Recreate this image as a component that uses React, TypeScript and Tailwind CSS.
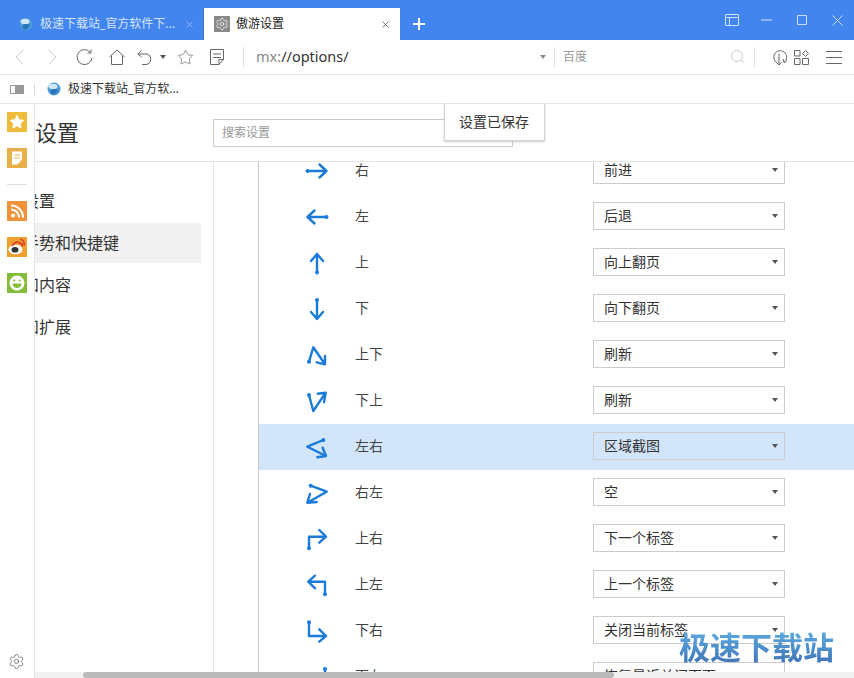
import { Settings, Star, X } from "lucide-react";
import type { ReactNode } from "react";

const FONT = "font-['Noto_Sans','Noto_Sans_CJK_SC',sans-serif]";

// gesture arrows, traced in a 24x24 box around the row's icon centre
const gestures: { label: string; action: string; dot: [number, number]; d: string; active?: boolean }[] = [
  { label: "右", action: "前进", dot: [2.5, 12], d: "M2.5 12H21.5M14.500 5.500L21.500 12L14.500 18.500" },
  { label: "左", action: "后退", dot: [21.5, 12], d: "M21.5 12H2.5M9.500 5.500L2.500 12L9.500 18.500" },
  { label: "上", action: "向上翻页", dot: [12, 21.5], d: "M12 21.5V3M6 10L12 3L18 10" },
  { label: "下", action: "向下翻页", dot: [12, 3], d: "M12 3V22M6 15L12 22L18 15" },
  { label: "上下", action: "刷新", dot: [4, 18.7], d: "M4 18.7L8.3 4.3L20 21.3M11.7 19.3L20 21.3L20 13" },
  { label: "下上", action: "刷新", dot: [4, 6], d: "M4 6L8.3 22L20.7 3.7M12.7 4.7L20.7 3.7L19 13.3" },
  { label: "左右", action: "区域截图", dot: [18.3, 5], d: "M18.3 5L2.3 11.7L21 21M12.3 22.3L21 21L17.7 12.7", active: true },
  { label: "右左", action: "空", dot: [5.7, 4.7], d: "M5.7 4.7L21.7 10.7L2.3 21.7M11.7 21L2.3 21.7L5 13" },
  { label: "上右", action: "下一个标签", dot: [4, 21.3], d: "M4 21.3V9.7H21M14.3 3L21 9.7L14.3 15.7" },
  { label: "上左", action: "上一个标签", dot: [20, 21.3], d: "M20 21.3V8.7H3.3M10 2.7L3.3 8.7L10 15.3" },
  { label: "下右", action: "关闭当前标签", dot: [4, 3.3], d: "M4 3.3V17H21M14.3 10.3L21 17L14.3 22.7" },
  { label: "下左", action: "恢复最近关闭页面", dot: [20, 4], d: "M20 4V17H3M10 10L3 17L10 23" },
];

const navItems = ["基本设置", "鼠标手势和快捷键", "标签和内容", "应用和扩展"];

function Line({ w, h, className, children }: { w: number; h: number; className?: string; children: ReactNode }) {
  return (
    <svg width={w} height={h} viewBox={`0 0 ${w} ${h}`} fill="none" stroke="currentColor" strokeWidth="1" className={className}>
      {children}
    </svg>
  );
}

function Globe() {
  return (
    <svg width="14" height="14" viewBox="0 0 14 14" className="shrink-0">
      <circle cx="7" cy="7" r="6.5" fill="#4a9bd8" />
      <ellipse cx="6" cy="4.5" rx="4.5" ry="2.8" fill="#cfe6f6" />
      <path d="M4 8c2-1.5 4-1 7-.5-1 3-3 5-5 5s-3-2-2-4.500z" fill="#2a75b8" />
    </svg>
  );
}

function Tabs() {
  return (
    <div className="flex h-10 shrink-0 items-end bg-[#4285ee]">
      <div className="flex h-8 w-[204px] items-center border-r border-[#3a74cf] pl-[19px] pr-2 text-xs text-[#d5e4fb]">
        <Globe />
        <span className="ml-[7px] whitespace-nowrap">极速下载站_官方软件下...</span>
        <X size={11} strokeWidth={1.5} className="ml-auto text-[#b5cffa]" />
      </div>
      <div className="flex h-8 w-[196px] items-center bg-white pl-[10px] pr-[9px] text-xs text-[#222]">
        <span className="flex h-4 w-4 items-center justify-center bg-[#8a8a8a] text-white">
          <Settings size={14} strokeWidth={1.2} />
        </span>
        <span className="ml-1.5">傲游设置</span>
        <X size={11} strokeWidth={1.5} className="ml-auto text-[#444]" />
      </div>
      <div className="flex h-8 w-[38px] items-center justify-center">
        <Line w={12} h={12} className="text-white">
          <path d="M6 0V12M0 6H12" strokeWidth="2" />
        </Line>
      </div>
      <div className="ml-auto flex h-10 items-center pr-[11px] text-[#cfe0fb]">
        <Line w={14} h={12} className="mr-[22px]">
          <path d="M.5.5h13v11H.5zM.5 3.500h13M4.500 3.500v8" />
        </Line>
        <Line w={11} h={2} className="mr-[25px]">
          <path d="M0 1H11" />
        </Line>
        <Line w={10} h={10} className="mr-[25px]">
          <path d="M.5.500h9v9h-9z" />
        </Line>
        <Line w={11} h={11}>
          <path d="M.5.500l10 10M10.500.500l-10 10" />
        </Line>
      </div>
    </div>
  );
}

function Toolbar() {
  return (
    <div className="flex h-[35px] shrink-0 items-center border-b border-[#e6e6e6] bg-white pl-[15px] text-[#666]">
      <Line w={9} h={16} className="text-[#ccc]">
        <path d="M8.500.500L1 8l7.500 7.500" />
      </Line>
      <Line w={9} h={16} className="ml-6 text-[#ccc]">
        <path d="M.5.500L8 8 .5 15.500" />
      </Line>
      <Line w={17} h={17} className="ml-[19px]">
        <path d="M14.500 3.500A7.500 7.500 0 1 0 16 9M15 .5v3.500h-3.500" />
      </Line>
      <Line w={16} h={16} className="ml-4">
        <path d="M.5 8L8 1l7.500 7M2.500 6.500v9h11v-9" />
      </Line>
      <Line w={17} h={15} className="ml-3">
        <path d="M4.500.5L.8 4l3.700 3M1 4h9a5.500 5.500 0 0 1 0 10.500H5" />
      </Line>
      <span className="ml-1.5 h-0 w-0 border-x-[3px] border-t-[4px] border-x-transparent border-t-[#555]" />
      <Star size={17} strokeWidth={1} className="ml-[11px]" />
      <Line w={14} h={16} className="ml-4">
        <path d="M.5.500h13v10l-4.500 5H.5zM3 5h8M3 8.500h8M9 15.500v-5h4.500" />
      </Line>
      <span className="ml-[19px] h-5 w-px bg-[#ddd]" />
      <span className="ml-3 w-[92px] whitespace-nowrap text-[14.5px] text-[#333]">
        <span className="text-[#888]">mx:</span>//options/
      </span>
      <span className="ml-[192px] h-0 w-0 border-x-[3px] border-t-[4px] border-x-transparent border-t-[#888]" />
      <span className="ml-2 h-5 w-px bg-[#ddd]" />
      <span className="ml-2 text-xs text-[#999]">百度</span>
      <Line w={14} h={14} className="ml-[144px] text-[#ccc]">
        <circle cx="6" cy="6" r="5.500" />
        <path d="M10 10l3.500 3.500" />
      </Line>
      <span className="ml-[9px] h-5 w-px bg-[#ddd]" />
      <Line w={14} h={18} className="ml-[18px]">
        <path d="M3.500 14.500A6.500 6.500 0 1 1 11 14.500M11 14.500l-1-3.500M11 14.500l2.500-1.500M6 5.500V17M3.200 14.200L6 17l2.800-2.800" />
      </Line>
      <Line w={15} h={15} className="ml-[7px]">
        <path d="M.5.500h5.500v5.500H.5zM.5 8.500h5.500v6H.5zM8.500 8.500h6v6h-6zM11.500.5l3 3-3 3-3-3z" />
      </Line>
      <Line w={16} h={13} className="ml-[17px]">
        <path d="M0 .5H16M0 6.500H16M0 12.500H16" />
      </Line>
    </div>
  );
}

function Bookmarks() {
  return (
    <div className="flex h-[29px] shrink-0 items-center border-b border-[#e6e6e6] bg-white pl-[10px] text-xs text-[#333]">
      <span className="flex h-[9px] w-[14px] border border-[#999]">
        <span className="ml-auto h-full w-2 bg-[#999]" />
      </span>
      <span className="ml-[10px] h-3 w-px bg-[#ddd]" />
      <span className="ml-[12px]">
        <Globe />
      </span>
      <span className="ml-[7px]">极速下载站_官方软...</span>
    </div>
  );
}

function Rail() {
  return (
    <div className="flex w-[35px] shrink-0 flex-col items-start border-r border-[#e5e5e5] bg-white pl-[7px] pt-2">
      <svg width="20" height="20" viewBox="0 0 20 20">
        <rect width="20" height="20" fill="#eebb3a" />
        <path d="M10 2.500l2.300 4.800 5.200.7-3.800 3.600 1 5.200-4.700-2.500-4.700 2.500 1-5.200L2.500 8l5.200-.7z" fill="#fff" />
      </svg>
      <svg width="20" height="20" viewBox="0 0 20 20" className="mt-4">
        <rect width="20" height="20" fill="#e9b04a" />
        <path d="M5 3.500h10v8l-4.500 5H5z" fill="#fff" />
        <path d="M7 7h6M7 10h6" stroke="#e9b04a" />
      </svg>
      <span className="mt-4 h-px w-5 bg-[#ddd]" />
      <svg width="20" height="20" viewBox="0 0 20 20" className="mt-4">
        <rect width="20" height="20" fill="#f0923a" />
        <circle cx="6" cy="14.500" r="2" fill="#fff" />
        <path d="M4 8.500a8 8 0 0 1 8 8M4 4.500a12 12 0 0 1 12 12" fill="none" stroke="#fff" strokeWidth="2.200" />
      </svg>
      <svg width="20" height="20" viewBox="0 0 20 20" className="mt-4">
        <rect width="20" height="20" fill="#f0a030" />
        <ellipse cx="8.500" cy="12.500" rx="7" ry="4.800" fill="#fff" />
        <ellipse cx="8" cy="12.800" rx="3.500" ry="2.800" fill="#333" />
        <path d="M5 9C8 5 11 4 13 6.500 15.500 6 15.500 8 15 9.500" fill="none" stroke="#d93a2b" strokeWidth="1.600" />
        <path d="M13 2.500c3 0 5 2.500 4 6" fill="none" stroke="#d93a2b" strokeWidth="1.500" />
      </svg>
      <svg width="20" height="20" viewBox="0 0 20 20" className="mt-4">
        <rect width="20" height="20" fill="#84bd3a" />
        <circle cx="10" cy="10" r="7.500" fill="#fff" />
        <circle cx="7.200" cy="7.500" r="1.100" fill="#84bd3a" />
        <circle cx="12.800" cy="7.500" r="1.100" fill="#84bd3a" />
        <path d="M5.500 10.500h9a4.500 4.500 0 0 1-9 0z" fill="#84bd3a" />
      </svg>
      <Settings size={17} strokeWidth={1} className="mb-2 ml-[1px] mt-auto text-[#555]" />
    </div>
  );
}

function GestureRow({ g }: { g: (typeof gestures)[number] }) {
  return (
    <div className={`flex h-[46px] shrink-0 items-center pl-[46px] ${g.active ? "bg-[#d3e5fb]" : ""}`}>
      <svg width="24" height="24" viewBox="0 0 24 24" fill="none" stroke="#1b7bd8" strokeWidth="2.400" strokeLinecap="round" strokeLinejoin="round" className="shrink-0 overflow-visible">
        <path d={g.d} />
        <circle cx={g.dot[0]} cy={g.dot[1]} r="2" fill="#1b7bd8" stroke="none" />
      </svg>
      <span className="mb-0.5 ml-[26px] w-[238px] text-sm text-[#444]">{g.label}</span>
      <div className={`mb-0.5 flex h-7 w-[192px] shrink-0 items-center border border-[#ccc] pl-[10px] pr-[6px] text-sm text-[#333] ${g.active ? "bg-[#d3e5fb]" : "bg-white"}`}>
        <span>{g.action}</span>
        <span className="ml-auto h-0 w-0 border-x-[3px] border-t-[4px] border-x-transparent border-t-[#555]" />
      </div>
    </div>
  );
}

function Content() {
  return (
    <div className="flex min-w-0 flex-1 flex-col overflow-hidden">
      <div className="flex h-[58px] shrink-0 items-center border-b border-[#e5e5e5]">
        <span className="-ml-[44px] w-[222px] whitespace-nowrap text-[22px] text-[#333]">傲游设置</span>
        <div className="flex h-7 w-[300px] items-center border border-[#ccc] pl-2 text-xs text-[#999]">搜索设置</div>
      </div>
      <div className="flex min-h-0 flex-1">
        <div className="w-[179px] shrink-0 border-r border-[#e5e5e5] pr-3 pt-[19px]">
          {navItems.map((item, i) => (
            <div key={item} className={`mb-0.5 flex h-10 items-center text-base text-[#333] ${i === 1 ? "bg-[#f1f1f1]" : ""}`}>
              <span className="-ml-[44px] whitespace-nowrap">{item}</span>
            </div>
          ))}
        </div>
        <div className="min-w-0 flex-1 overflow-hidden pl-[44px]">
          <div className="-mt-[14px] flex flex-col border-l border-[#ccc]">
            {gestures.map((g) => (
              <GestureRow key={g.label} g={g} />
            ))}
          </div>
        </div>
      </div>
      <div className="flex h-[6px] shrink-0 bg-[#f1f1f1] pl-12">
        <div className="h-full w-[531px] rounded-full bg-[#bbb]" />
      </div>
    </div>
  );
}

export default function App() {
  return (
    <div className={`relative flex h-[678px] w-[854px] flex-col overflow-hidden bg-white ${FONT}`}>
      <Tabs />
      <Toolbar />
      <Bookmarks />
      <div className="flex min-h-0 flex-1">
        <Rail />
        <Content />
      </div>
      {/* save toast */}
      <div className="absolute left-[444px] top-[104px] flex h-[37px] w-[101px] items-center justify-center border border-t-0 border-[#d5d5d5] bg-white pr-px text-sm text-[#333] shadow-[0_1px_2px_rgba(0,0,0,0.2)]">
        设置已保存
      </div>
      {/* site watermark */}
      <div className="absolute left-[679px] top-[625px] bg-gradient-to-b from-[#62b4e8] to-[#3b6db2] bg-clip-text text-[31px] font-bold leading-[44px] text-transparent">
        极速下载站
      </div>
    </div>
  );
}
